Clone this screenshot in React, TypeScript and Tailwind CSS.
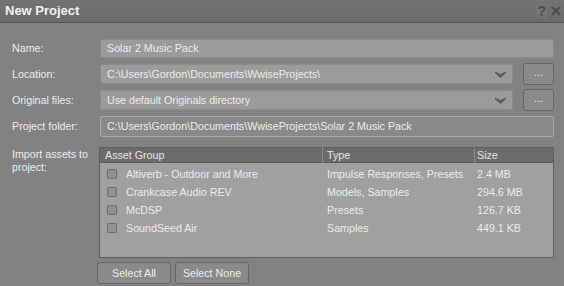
import React from 'react';

const assets = [
  { name: 'Altiverb - Outdoor and More', type: 'Impulse Responses, Presets', size: '2.4 MB' },
  { name: 'Crankcase Audio REV', type: 'Models, Samples', size: '294.6 MB' },
  { name: 'McDSP', type: 'Presets', size: '126.7 KB' },
  { name: 'SoundSeed Air', type: 'Samples', size: '449.1 KB' },
];

function Chevron() {
  return (
    <svg width="11" height="7" viewBox="0 0 11 7" className="shrink-0">
      <path d="M0 0.5 L5.5 3 L11 0.5 L11 2 L5.5 7 L0 2 Z" fill="#5c5c5c" />
    </svg>
  );
}

function Combo({ value }: { value: string }) {
  return (
    <div className="flex items-center flex-1">
      <div className="flex-1 h-[20px] flex items-center justify-between pl-[6px] pr-[6px] bg-[#9b9b9b] border border-[#8c8c8c] rounded-[2px]">
        <span className="truncate">{value}</span>
        <Chevron />
      </div>
      <button className="ml-[10px] w-[31px] h-[22px] flex items-center justify-center bg-[#8a8a8a] border border-[#666666] rounded-[3px] text-[#e8e8e8] leading-none pb-[4px]">
        ...
      </button>
    </div>
  );
}

function Row({ label, children }: { label: string; children: React.ReactNode }) {
  return (
    <div className="flex items-center h-[22px]">
      <div className="w-[88px] shrink-0">{label}</div>
      {children}
    </div>
  );
}

export default function App() {
  return (
    <div
      className="w-[564px] h-[286px] overflow-hidden bg-[#828282] text-[#ececec] text-[10.7px] whitespace-nowrap"
      style={{ fontFamily: '"Liberation Sans", Arial, sans-serif' }}
    >
      {/* Title bar */}
      <div className="h-[23px] flex items-center justify-between bg-gradient-to-b from-[#737373] to-[#6a6a6a] border-b border-[#545454]">
        <span className="pl-[5px] text-[13px] font-bold text-[#f2f2f2]">New Project</span>
        <div className="flex items-center gap-[3px] pr-[2px] text-[#4a4a4a] font-bold text-[14px] leading-none">
          <span className="px-[1px] bg-[#747474]">?</span>
          <span>✕</span>
        </div>
      </div>

      <div className="flex flex-col pl-[12px] pr-[10px] pt-[14px]">
        <div className="flex flex-col gap-[4px]">
          <Row label="Name:">
            <div className="flex-1 h-[19px] flex items-center pl-[6px] bg-[#9b9b9b] border border-[#8c8c8c] rounded-[2px]">
              Solar 2 Music Pack
            </div>
          </Row>
          <Row label="Location:">
            <Combo value="C:\Users\Gordon\Documents\WwiseProjects\" />
          </Row>
          <Row label="Original files:">
            <Combo value="Use default Originals directory" />
          </Row>
          <Row label="Project folder:">
            <div className="flex-1 h-[21px] flex items-center pl-[6px] bg-[#898989] border border-[#a9a9a9] rounded-[2px]">
              C:\Users\Gordon\Documents\WwiseProjects\Solar 2 Music Pack
            </div>
          </Row>
        </div>

        <div className="flex mt-[10px]">
          <div className="w-[87px] shrink-0 leading-[13px] pt-[1px] whitespace-normal">
            Import assets to
            <br />
            project:
          </div>
          <div className="flex-1 flex flex-col">
            <div className="h-[111px] flex flex-col bg-[#a0a0a0] border border-[#5e5e5e]">
              <div className="h-[15px] flex items-center bg-[#6b6b6b] text-[#e6e6e6] border-b border-[#5e5e5e]">
                <div className="w-[222px] pl-[5px]">Asset Group</div>
                <div className="w-[152px] pl-[4px] border-l border-[#8a8a8a]">Type</div>
                <div className="flex-1 pl-[2px] border-l border-[#8a8a8a]">Size</div>
              </div>
              <div className="flex flex-col pt-[2px]">
                {assets.map((a) => (
                  <div key={a.name} className="h-[18px] flex items-center">
                    <div className="w-[222px] flex items-center pl-[7px]">
                      <span className="w-[10px] h-[10px] border border-[#6f6f6f] bg-[#919191] rounded-[1px] mr-[9px]" />
                      <span>{a.name}</span>
                    </div>
                    <div className="w-[152px] pl-[5px]">{a.type}</div>
                    <div className="flex-1 pl-[3px]">{a.size}</div>
                  </div>
                ))}
              </div>
            </div>
            <div className="flex gap-[4px] mt-[4px] -ml-[2px]">
              <button className="w-[74px] h-[22px] bg-[#8a8a8a] border border-[#666666] rounded-[3px] text-[#eeeeee]">
                Select All
              </button>
              <button className="w-[74px] h-[22px] bg-[#8a8a8a] border border-[#666666] rounded-[3px] text-[#eeeeee]">
                Select None
              </button>
            </div>
          </div>
        </div>
      </div>
    </div>
  );
}
